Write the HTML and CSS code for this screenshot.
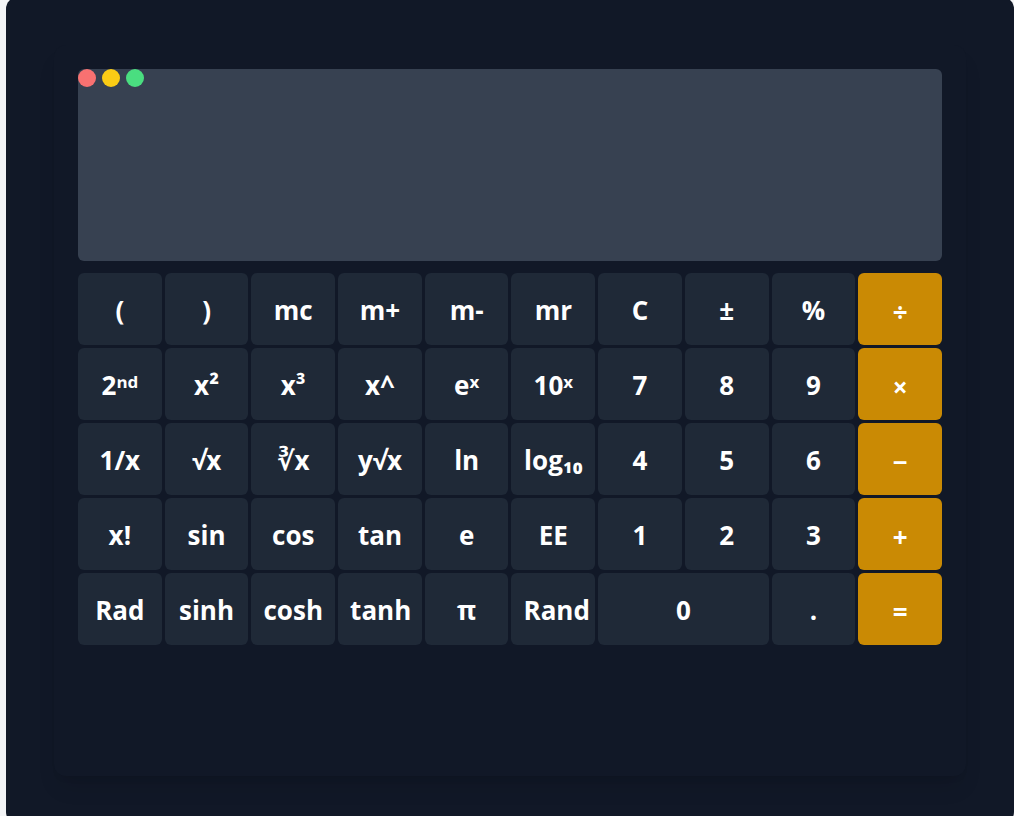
FILE: index.html
```html
<!DOCTYPE html>
<html lang="en">
<head>
<meta charset="utf-8">
<meta name="viewport" content="width=device-width, initial-scale=1">
<title>Calculator</title>
<link rel="stylesheet" href="styles.css">
</head>
<body>
<main class="stage">
  <section class="calculator" aria-label="Scientific calculator">
    <div class="screen">
      <div class="lights" aria-hidden="true">
        <span class="light light-close"></span>
        <span class="light light-minimize"></span>
        <span class="light light-expand"></span>
      </div>
      <output class="result" aria-label="Result"></output>
    </div>
    <div class="keys">
      <button class="key" type="button">(</button>
      <button class="key" type="button">)</button>
      <button class="key" type="button">mc</button>
      <button class="key" type="button">m+</button>
      <button class="key" type="button">m-</button>
      <button class="key" type="button">mr</button>
      <button class="key" type="button">C</button>
      <button class="key" type="button">±</button>
      <button class="key" type="button">%</button>
      <button class="key key-op" type="button">÷</button>

      <button class="key" type="button">2ⁿᵈ</button>
      <button class="key" type="button">x²</button>
      <button class="key" type="button">x³</button>
      <button class="key" type="button">x^</button>
      <button class="key" type="button">eˣ</button>
      <button class="key" type="button">10ˣ</button>
      <button class="key" type="button">7</button>
      <button class="key" type="button">8</button>
      <button class="key" type="button">9</button>
      <button class="key key-op" type="button">×</button>

      <button class="key" type="button">1/x</button>
      <button class="key" type="button">√x</button>
      <button class="key" type="button">∛x</button>
      <button class="key" type="button">y√x</button>
      <button class="key" type="button">ln</button>
      <button class="key" type="button">log₁₀</button>
      <button class="key" type="button">4</button>
      <button class="key" type="button">5</button>
      <button class="key" type="button">6</button>
      <button class="key key-op" type="button">−</button>

      <button class="key" type="button">x!</button>
      <button class="key" type="button">sin</button>
      <button class="key" type="button">cos</button>
      <button class="key" type="button">tan</button>
      <button class="key" type="button">e</button>
      <button class="key" type="button">EE</button>
      <button class="key" type="button">1</button>
      <button class="key" type="button">2</button>
      <button class="key" type="button">3</button>
      <button class="key key-op" type="button">+</button>

      <button class="key" type="button">Rad</button>
      <button class="key" type="button">sinh</button>
      <button class="key" type="button">cosh</button>
      <button class="key" type="button">tanh</button>
      <button class="key" type="button">π</button>
      <button class="key" type="button">Rand</button>
      <button class="key key-wide" type="button">0</button>
      <button class="key" type="button">.</button>
      <button class="key key-op" type="button">=</button>
    </div>
  </section>
</main>
</body>
</html>
```

FILE: styles.css
```css
* {
  box-sizing: border-box;
}

html {
  overflow: hidden;
  background: #f3f4f6;
}

body {
  margin: -3px 0 0 6px;
  font-family: "Segoe UI", "Open Sans", "Noto Sans", "DejaVu Sans", sans-serif;
}

.stage {
  padding: 48px;
  border-radius: 12px;
  background: #111827;
  box-shadow: 0 15px 22px -5px rgba(0, 0, 0, 0.1), 0 6px 9px -6px rgba(0, 0, 0, 0.1);
}

.calculator {
  padding: 24px 24px 131px;
  border-radius: 12px;
  background: #111827;
  box-shadow: 0 15px 22px -5px rgba(0, 0, 0, 0.1), 0 6px 9px -6px rgba(0, 0, 0, 0.1);
}

.screen {
  display: flex;
  flex-direction: column;
  min-height: 192px;
  margin-bottom: 12px;
  border-radius: 6px;
  background: #374151;
}

.lights {
  display: flex;
  gap: 6px;
}

.light {
  width: 18px;
  height: 18px;
  border-radius: 50%;
}

.light-close {
  background: #f87171;
}

.light-minimize {
  background: #facc15;
}

.light-expand {
  background: #4ade80;
}

.result {
  flex: 1;
  padding: 12px;
  color: #ffffff;
  text-align: right;
}

.keys {
  display: grid;
  grid-template-columns: repeat(10, minmax(0, 1fr));
  grid-auto-rows: 72px;
  gap: 3px;
}

.key {
  padding: 2px 12px 0;
  border: 0;
  border-radius: 6px;
  background: #1f2937;
  color: #ffffff;
  font-family: inherit;
  font-size: 26px;
  font-weight: 700;
  line-height: 36px;
  white-space: nowrap;
  cursor: pointer;
}

.key-wide {
  grid-column: span 2;
}

.key-op {
  padding-top: 6px;
  background: #ca8a04;
}
```
